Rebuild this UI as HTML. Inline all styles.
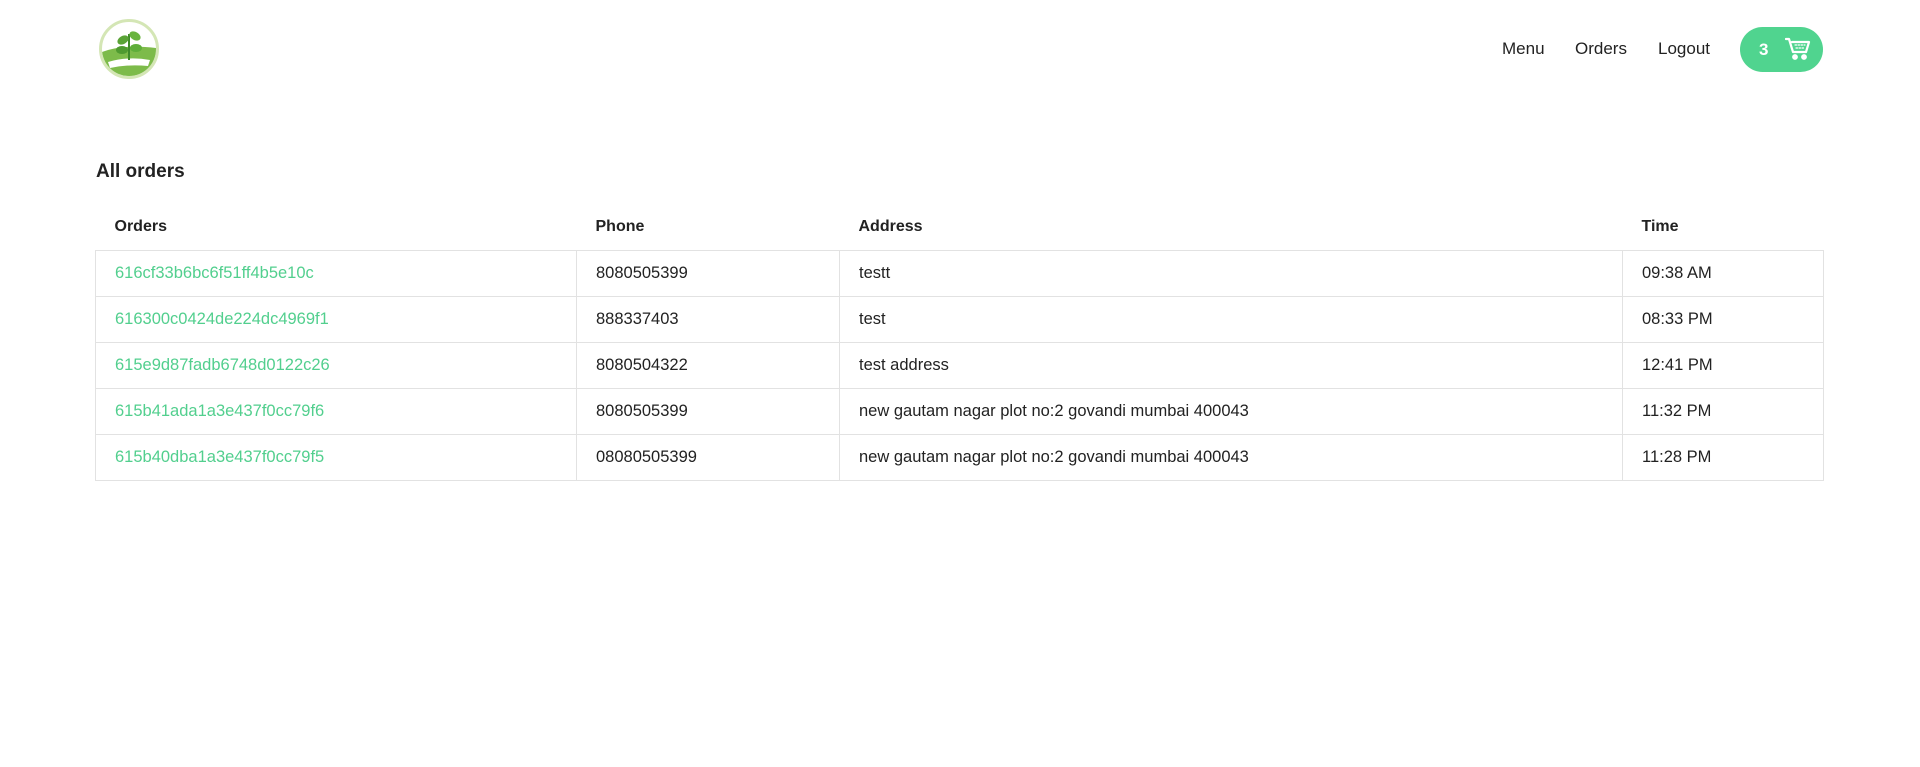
<!DOCTYPE html>
<html><head><meta charset="utf-8"><style>
*{margin:0;padding:0;box-sizing:border-box}
body{width:1920px;height:767px;background:#fff;font-family:"Liberation Sans",sans-serif;color:#222;position:relative;overflow:hidden}
.logo{position:absolute;left:99px;top:19px;width:60px;height:60px;border-radius:50%;border:3px solid #d4e6b5;background:#fff;overflow:hidden}
.nav{position:absolute;top:39px;font-size:17px;color:#222}
.cart{position:absolute;left:1740px;top:27px;width:83px;height:45px;border-radius:23px;background:#50d48f;color:#fff;font-weight:bold;font-size:17px}
.cart span{position:absolute;left:19px;top:13px}
h2{position:absolute;left:96px;top:161px;font-size:19px;font-weight:bold;color:#222}
table{position:absolute;left:95px;top:204px;width:1729px;border-collapse:collapse;font-size:16.5px}
th{text-align:left;font-weight:bold;height:46px;padding:0 19px;vertical-align:middle;font-size:16px}
td{height:46px;padding:0 19px;border:1px solid #e2e2e2;vertical-align:middle}
td a{color:#52cf8e;text-decoration:none}
</style></head><body>
<div class="logo"><svg width="54" height="54" viewBox="0 0 54 54"><path d="M0 30 Q20 22 54 26 L54 54 L0 54Z" fill="#7dbb4a"/><path d="M6 40 Q26 34 48 38 L46 44 Q26 42 8 46Z" fill="#fff"/><path d="M27 38 V12" stroke="#3f8a2a" stroke-width="2"/><ellipse cx="21" cy="18" rx="6" ry="4" fill="#5aa336" transform="rotate(-30 21 18)"/><ellipse cx="33" cy="14" rx="6" ry="4" fill="#6ab43f" transform="rotate(30 33 14)"/><ellipse cx="20" cy="28" rx="6" ry="4" fill="#4f9a30"/><ellipse cx="34" cy="26" rx="6" ry="4" fill="#5fae3a"/></svg></div>
<div class="nav" style="left:1502px">Menu</div>
<div class="nav" style="left:1575px">Orders</div>
<div class="nav" style="left:1658px">Logout</div>
<div class="cart"><span>3</span>
<svg style="position:absolute;left:45px;top:10px" width="28" height="25" viewBox="0 0 28 25" fill="none" stroke="#fff" stroke-width="2.2" stroke-linecap="round" stroke-linejoin="round"><path d="M1 2h3l4 13h13l3-10H7"/><path d="M10 8h10M11 11h9" stroke-width="1.2" stroke-dasharray="1.5 1.5"/><circle cx="10" cy="20" r="1.8" fill="#fff"/><circle cx="19" cy="20" r="1.8" fill="#fff"/></svg></div>
<h2>All orders</h2>
<table>
<colgroup><col style="width:481px"><col style="width:263px"><col style="width:783px"><col></colgroup>
<tr><th>Orders</th><th>Phone</th><th>Address</th><th>Time</th></tr>
<tr><td><a>616cf33b6bc6f51ff4b5e10c</a></td><td>8080505399</td><td>testt</td><td>09:38 AM</td></tr>
<tr><td><a>616300c0424de224dc4969f1</a></td><td>888337403</td><td>test</td><td>08:33 PM</td></tr>
<tr><td><a>615e9d87fadb6748d0122c26</a></td><td>8080504322</td><td>test address</td><td>12:41 PM</td></tr>
<tr><td><a>615b41ada1a3e437f0cc79f6</a></td><td>8080505399</td><td>new gautam nagar plot no:2 govandi mumbai 400043</td><td>11:32 PM</td></tr>
<tr><td><a>615b40dba1a3e437f0cc79f5</a></td><td>08080505399</td><td>new gautam nagar plot no:2 govandi mumbai 400043</td><td>11:28 PM</td></tr>
</table>
</body></html>
